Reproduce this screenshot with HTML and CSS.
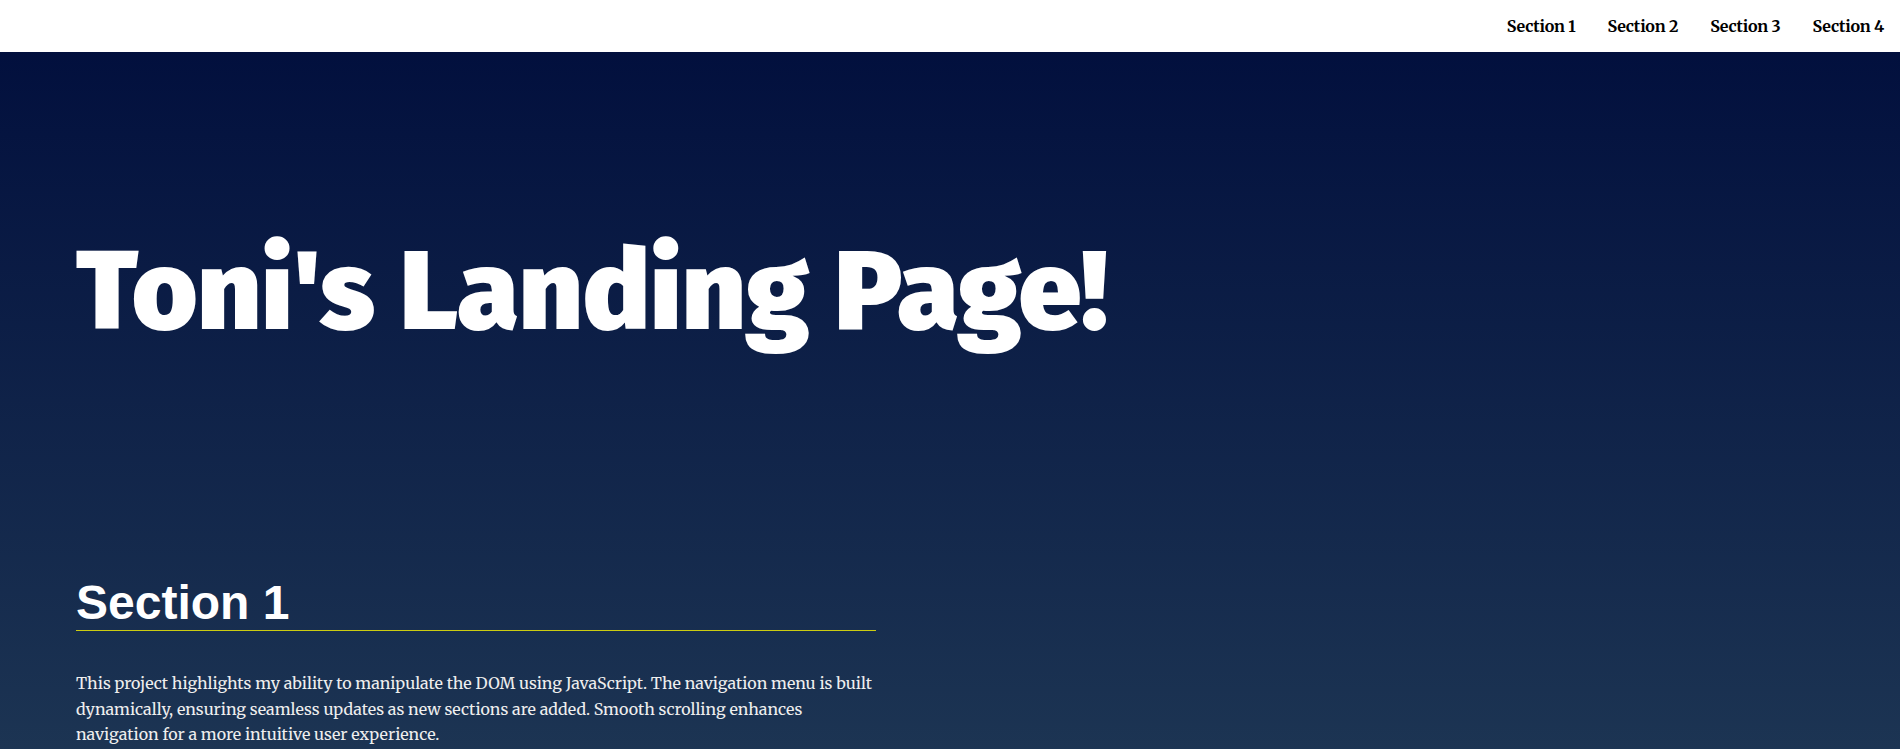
FILE: index.html
```html
<!DOCTYPE html>
<html lang="en">
<head>
  <meta charset="utf-8">
  <title>Toni's Landing Page</title>
  <link rel="stylesheet" href="styles.css">
</head>
<body>
  <header class="page-header">
    <nav class="navbar">
      <ul class="navbar-list">
        <li><a class="menu-link" href="#section1">Section 1</a></li>
        <li><a class="menu-link" href="#section2">Section 2</a></li>
        <li><a class="menu-link" href="#section3">Section 3</a></li>
        <li><a class="menu-link" href="#section4">Section 4</a></li>
      </ul>
    </nav>
  </header>
  <main class="main">
    <header class="main-hero">
      <h1 class="hero-title">Toni's Landing Page!</h1>
    </header>
    <section id="section1" class="section">
      <div class="landing-container">
        <h2 class="section-title">Section 1</h2>
        <p class="section-text">This project highlights my ability to manipulate the DOM using JavaScript. The navigation menu is built dynamically, ensuring seamless updates as new sections are added. Smooth scrolling enhances navigation for a more intuitive user experience.</p>
      </div>
    </section>
    <section id="section2" class="section">
      <div class="landing-container">
        <h2 class="section-title">Section 2</h2>
        <p class="section-text">Each section is detected while scrolling, and the matching link in the navigation bar is highlighted so visitors always know where they are on the page.</p>
      </div>
    </section>
    <section id="section3" class="section">
      <div class="landing-container">
        <h2 class="section-title">Section 3</h2>
        <p class="section-text">The layout is responsive and adapts to different screen sizes, keeping the content readable on phones, tablets and desktops.</p>
      </div>
    </section>
    <section id="section4" class="section">
      <div class="landing-container">
        <h2 class="section-title">Section 4</h2>
        <p class="section-text">Adding a new section to the page automatically adds a new link to the menu, with no extra work needed.</p>
      </div>
    </section>
  </main>
  <footer class="page-footer">
    <p class="footer-text">&copy; Toni</p>
  </footer>
</body>
</html>
```
FILE: styles.css
```css
html {
  background: #0e2047;
}

body {
  margin: 0;
  font-family: Merriweather, "DejaVu Serif", serif;
  color: #fff;
  background: linear-gradient(180deg, rgb(0, 13, 60) 0px, rgb(136, 203, 171) 3636px);
  min-height: 3636px;
}

/* Fixed top navigation */
.page-header {
  position: fixed;
  top: 0;
  left: 0;
  right: 0;
  z-index: 5;
  background: #fff;
}

.navbar-list {
  display: flex;
  justify-content: flex-end;
  list-style: none;
  margin: 0;
  padding: 0;
}

.menu-link {
  display: block;
  padding: 16px;
  font-family: Merriweather, "DejaVu Serif", serif;
  font-size: 16px;
  font-weight: bold;
  letter-spacing: -0.2px;
  color: #000;
  text-decoration: none;
}

/* Main content */
.main {
  margin: 0 12px;
}

.main-hero {
  padding-top: 224px;
}

.hero-title {
  margin: 0 64px 112px;
  font-family: "Fira Sans", "Open Sans", sans-serif;
  font-size: 112px;
  font-weight: 900;
  line-height: 135px;
  color: #fff;
}

.section {
  min-height: 80vh;
}

.landing-container {
  max-width: 800px;
  padding: 64px;
  text-align: left;
}

.section:nth-of-type(even) .landing-container {
  margin-left: auto;
  text-align: right;
}

.section-title {
  margin: 40px 0;
  border-bottom: 1px solid #cc1;
  font-family: "Liberation Sans", Arial, sans-serif;
  font-size: 48px;
  font-weight: bold;
  color: #fff;
}

.section-text {
  margin: 16px 0;
  font-size: 16px;
  line-height: 1.6;
  color: #eee;
}

.page-footer {
  padding: 24px 76px;
}

.footer-text {
  margin: 0;
  color: #fff;
}
```
